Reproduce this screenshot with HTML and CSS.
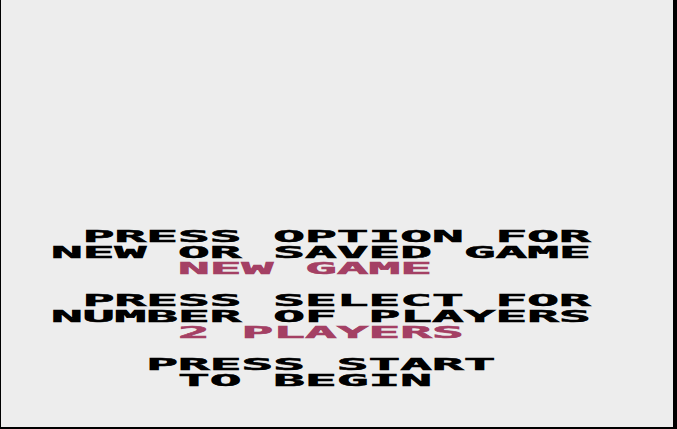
FILE: index.html
```html
<!DOCTYPE html>
<html lang="en">
<head>
  <meta charset="UTF-8" />
  <title>Title Screen</title>
  <link rel="stylesheet" href="styles.css">
</head>
<body>
  <div class="screen">
    <div class="menu">
      <div class="line"> PRESS OPTION FOR</div>
      <div class="line">NEW OR SAVED GAME</div>
      <div class="line choice">    NEW GAME</div>
      <div class="line"></div>
      <div class="line"> PRESS SELECT FOR</div>
      <div class="line">NUMBER OF PLAYERS</div>
      <div class="line choice">    2 PLAYERS</div>
      <div class="line"></div>
      <div class="line">   PRESS START</div>
      <div class="line">    TO BEGIN</div>
    </div>
  </div>
</body>
</html>
```

FILE: styles.css
```css
* {
  margin: 0;
  padding: 0;
  box-sizing: border-box;
}

body {
  width: 100vw;
  height: 100vh;
  overflow: hidden;
  background: #000;
}

.screen {
  width: 100%;
  height: 100%;
  background: #ededed;
  border-left: 1px solid #000;
  border-right: 4px solid #000;
  border-bottom: 2px solid #000;
  padding: 229px 0 0 50px;
}

/* wide blocky text, 20 columns across */
.menu {
  width: 170px;
  font-family: "DejaVu Sans Mono", "Liberation Mono", monospace;
  font-weight: bold;
  font-size: 15px;
  line-height: 16px;
  color: #000;
  transform: scaleX(3.516);
  transform-origin: left top;
  -webkit-text-stroke: 0.5px currentColor;
}

.line {
  height: 16px;
  white-space: pre;
}

.choice {
  color: #a44064;
}
```
